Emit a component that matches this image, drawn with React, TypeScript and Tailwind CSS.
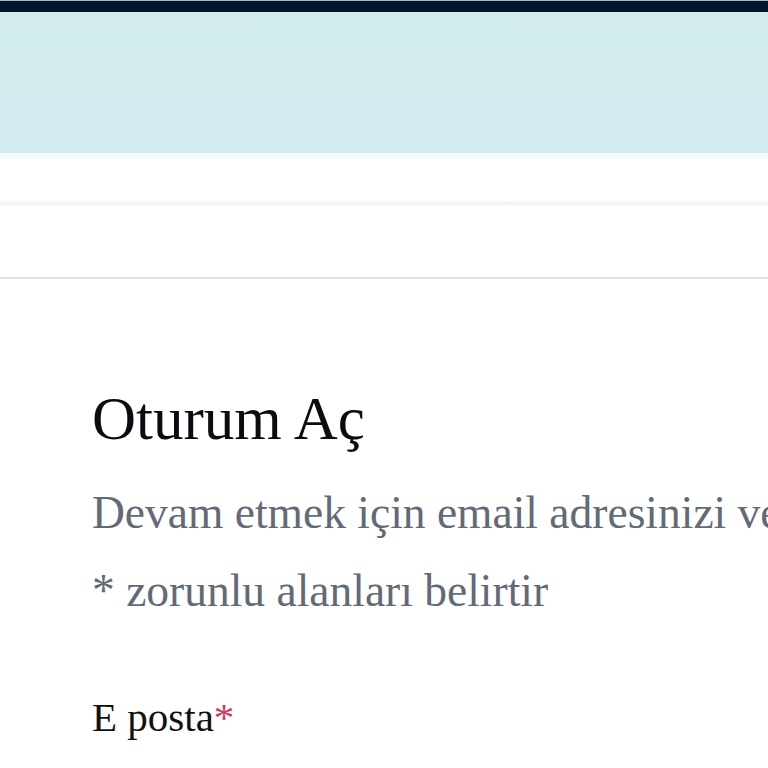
export default function App() {
  return (
    <div className="min-h-[768px] w-full overflow-hidden bg-white" style={{ fontFamily: '"Liberation Serif", "Times New Roman", serif' }}>
      {/* Üst şerit */}
      <div className="h-px bg-[#a7b6c4]" />
      <div className="h-[11px] bg-[#03172c]" />
      <div className="h-px bg-[#d6f0fb]" />
      <div className="h-[140px] bg-gradient-to-b from-[#d2edec] to-[#d2ebf0]" />
      <div className="h-[6px] bg-[#f6fcfd]" />

      {/* Boş navigasyon alanı */}
      <div className="h-[42px] bg-white" />
      <div className="h-[5px] bg-gradient-to-b from-[#fbfbfb] via-[#f3f3f3] to-[#fbfbfb]" />
      <div className="h-[71px] bg-white" />
      <div className="h-[2px] bg-[#e3e3e3]" />

      {/* Form */}
      <div className="pl-[92px] pt-[104px] whitespace-nowrap">
        <h1 className="text-[61px] leading-[72px] text-[#0b0b12]">Oturum Aç</h1>
        <p className="mt-[19px] text-[45.5px] leading-[78px] text-[#626a78]">
          Devam etmek için email adresinizi ve şifrenizi girin
        </p>
        <p className="text-[45.5px] leading-[78px] text-[#626a78]">* zorunlu alanları belirtir</p>
        <label className="mt-[62px] block text-[41px] leading-[50px] text-[#111111]">
          E posta<span className="text-[#cf3b5d]">*</span>
        </label>
      </div>
    </div>
  );
}
